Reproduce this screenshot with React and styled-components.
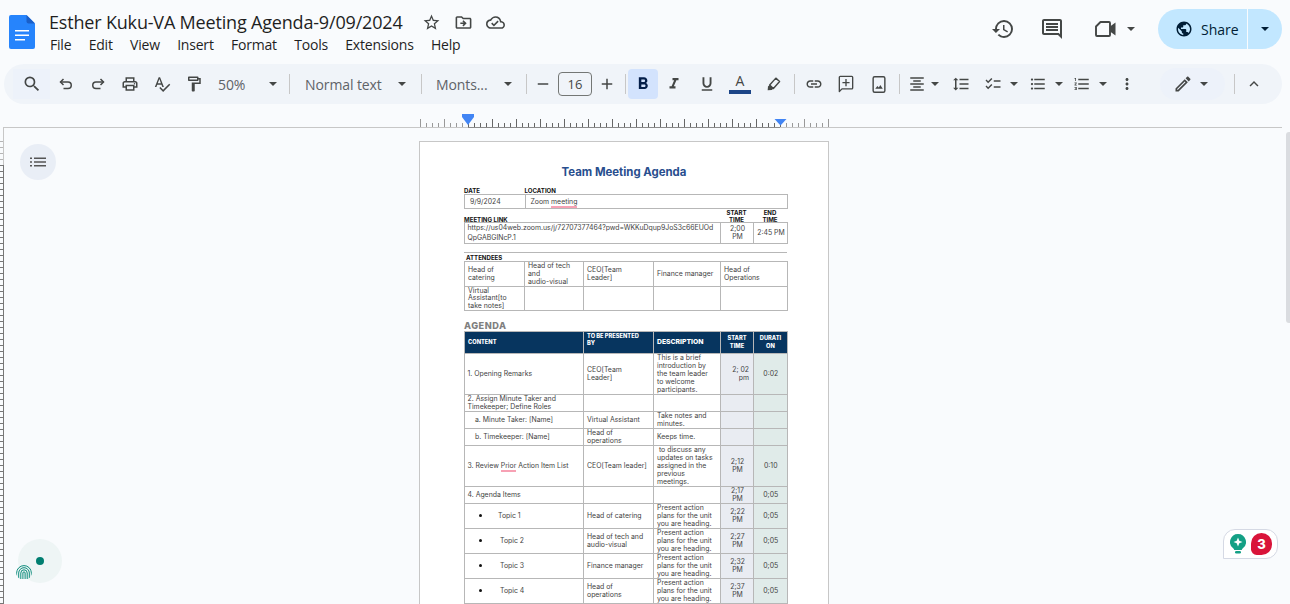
import React from "react";
import styled, { createGlobalStyle } from "styled-components";
import {
  MdSearch, MdOutlinePrint, MdOutlineSpellcheck, MdOutlineFormatPaint,
  MdRemove, MdAdd, MdFormatBold, MdFormatItalic, MdFormatUnderlined, MdLink,
  MdFormatAlignCenter, MdFormatLineSpacing, MdChecklist, MdFormatListBulleted,
  MdFormatListNumbered, MdMoreVert, MdOutlineEdit, MdExpandLess, MdHistory,
  MdOutlineComment, MdPublic, MdStarBorder, MdOutlineDriveFileMove, MdOutlineCloudDone,
} from "react-icons/md";

const GlobalStyle = createGlobalStyle`
  html, body {
    margin: 0;
    height: 100%;
    overflow: hidden;
    background: #f9fbfd;
    font-family: "Open Sans", "Liberation Sans", sans-serif;
    color: #1f1f1f;
  }
`;

const Screen = styled.div`
  width: 1290px;
  height: 604px;
  position: relative;
  overflow: hidden;
  display: flex;
  flex-direction: column;
`;

const Header = styled.header`
  height: 64px;
  display: flex;
  flex-shrink: 0;
`;
const LogoWrap = styled.div`
  width: 49px;
  padding: 15px 0 0 9px;
  box-sizing: border-box;
  flex-shrink: 0;
`;
const TitleBlock = styled.div`
  display: flex;
  flex-direction: column;
  padding-top: 10px;
`;
const TitleRow = styled.div`
  display: flex;
  align-items: center;
  height: 25px;
`;
const DocTitle = styled.div`
  font-size: 18px;
  line-height: 25px;
  letter-spacing: -0.18px;
  width: 366px;
  color: #1f1f1f;
  white-space: nowrap;
`;
const TitleIcon = styled.span`
  width: 32px;
  display: flex;
  justify-content: center;
  font-size: 19px;
  color: #444746;
`;
const Menu = styled.nav`
  display: flex;
  gap: 17.3px;
  padding-left: 1px;
  font-size: 14px;
  letter-spacing: -0.2px;
  line-height: 20px;
  color: #1f1f1f;
`;
const HeaderRight = styled.div`
  margin-left: auto;
  margin-right: 8px;
  padding-top: 9px;
  display: flex;
  align-items: flex-start;
`;
const HeaderIcon = styled.span`
  width: ${(p) => p.$w}px;
  height: 40px;
  margin-left: ${(p) => p.$ml || 0}px;
  display: flex;
  align-items: center;
  justify-content: center;
  color: #444746;
  font-size: 24px;
`;
const ShareButton = styled.div`
  width: 124px;
  height: 40px;
  margin-left: 20px;
  border-radius: 20px;
  background: #c2e7ff;
  display: flex;
  color: #001d35;
  font-size: 14px;
  font-weight: 500;
`;
const ShareMain = styled.div`
  width: 90px;
  display: flex;
  align-items: center;
  gap: 8px;
  padding-left: 17px;
  box-sizing: border-box;
  border-right: 1px solid #f9fbfd;
  font-size: 14px;
`;
const ShareDrop = styled.div`
  flex: 1;
  display: flex;
  align-items: center;
  justify-content: center;
`;

const Caret = styled.span`
  display: inline-block;
  width: 0;
  height: 0;
  border-left: 4.5px solid transparent;
  border-right: 4.5px solid transparent;
  border-top: 4.5px solid ${(p) => p.$color || "#444746"};
`;

const Toolbar = styled.div`
  height: 40px;
  margin: 0 8px 0 4px;
  padding-left: 9px;
  border-radius: 20px;
  background: #f0f4f9;
  display: flex;
  align-items: center;
  color: #444746;
  flex-shrink: 0;
`;
const ToolBtn = styled.div`
  width: ${(p) => p.$w || 32}px;
  height: 30px;
  margin-left: ${(p) => p.$ml || 0}px;
  flex-shrink: 0;
  display: flex;
  align-items: center;
  justify-content: center;
  font-size: ${(p) => p.$size || 18}px;
  color: #444746;
  position: relative;
`;
const SearchBtn = styled(ToolBtn)`
  background: #edf2fa;
  width: 37px;
  font-size: 20px;
`;
const ActiveBtn = styled(ToolBtn)`
  background: #d3e3fd;
  border-radius: 4px;
  color: #041e49;
  width: 30px;
  font-size: 20px;
`;
const Divider = styled.span`
  width: 1px;
  height: 20px;
  background: #c7c7c7;
  margin-left: ${(p) => p.$ml || 0}px;
  margin-right: ${(p) => p.$mr || 0}px;
  flex-shrink: 0;
`;
const Dropdown = styled.div`
  width: ${(p) => p.$w}px;
  padding: 0 8px 0 ${(p) => p.$pl || 8}px;
  box-sizing: border-box;
  display: flex;
  align-items: center;
  justify-content: space-between;
  font-size: 14px;
  letter-spacing: -0.1px;
  color: #5f6368;
  flex-shrink: 0;
`;
const SizeBox = styled.div`
  width: 34px;
  height: 24px;
  box-sizing: border-box;
  border: 1px solid #747775;
  border-radius: 4px;
  display: flex;
  align-items: center;
  justify-content: center;
  font-size: 13px;
  color: #444746;
  flex-shrink: 0;
`;
const ColorLetter = styled.span`
  font-size: 14px;
  line-height: 14px;
  font-weight: 500;
  margin-top: -7px;
  color: #444746;
`;
const ColorBar = styled.span`
  position: absolute;
  left: 5px;
  right: 5px;
  bottom: 5px;
  height: 4px;
  background: #1c4587;
`;
const ModePill = styled.div`
  width: 65px;
  height: 32px;
  margin-left: 18px;
  border-radius: 16px;
  background: #edf2fa;
  display: flex;
  align-items: center;
  gap: 7px;
  padding-left: 13px;
  box-sizing: border-box;
  font-size: 20px;
  flex-shrink: 0;
`;

const RulerRow = styled.div`
  height: 24px;
  padding-left: 3px;
  flex-shrink: 0;
  line-height: 0;
`;

const Workspace = styled.main`
  flex: 1;
  display: flex;
  min-height: 0;
`;
const VerticalRuler = styled.svg`
  width: 4px;
  height: 476px;
  flex-shrink: 0;
`;
const Canvas = styled.div`
  flex: 1;
  padding: 13px 0 0 415px;
  overflow: hidden;
`;

const Page = styled.div`
  width: 410px;
  height: 560px;
  box-sizing: border-box;
  padding: 23px 41px 0 44px;
  background: #fff;
  border: 1px solid #c7c7c7;
  font-family: Inter, "Liberation Sans", sans-serif;
  font-size: 6.9px;
  line-height: 8px;
  color: #434343;
`;
const PageTitle = styled.div`
  font-size: 11.4px;
  line-height: 14px;
  font-weight: 700;
  color: #284e8e;
  text-align: center;
  padding-right: 3px;
`;
const LabelRow = styled.div`
  display: grid;
  grid-template-columns: ${(p) => p.$cols};
  align-items: end;
  margin-top: ${(p) => p.$mt || 0}px;
  padding-left: ${(p) => p.$pl || 0}px;
  height: ${(p) => p.$h}px;
`;
const Label = styled.div`
  font-size: 6.1px;
  line-height: 7px;
  font-weight: 700;
  color: #111;
  text-align: ${(p) => p.$align || "left"};
`;
const Rule = styled.div`
  height: 1px;
  background: #b7b7b7;
  margin-top: 8px;
`;
const AgendaHeading = styled.div`
  margin-top: 10px;
  height: 10px;
  font-size: 9.2px;
  letter-spacing: 0.5px;
  line-height: 10px;
  font-weight: 800;
  color: #7f7f7f;
`;

const Table = styled.table`
  width: 323px;
  table-layout: fixed;
  border-collapse: collapse;
`;
const Col = styled.col`
  width: ${(p) => p.$w}px;
`;
const Row = styled.tr`
  height: ${(p) => p.$h}px;
`;
const Cell = styled.td`
  border: 1px solid #b7b7b7;
  padding: 0 ${(p) => p.$pr ?? 2}px 0 ${(p) => p.$pl || 2.5}px;
  line-height: ${(p) => p.$lh || 8}px;
  text-align: ${(p) => p.$align || "left"};
  vertical-align: middle;
  background: ${(p) => p.$bg || "transparent"};
  overflow: hidden;
  white-space: nowrap;
`;
const HeadCell = styled.th`
  border: 1px solid #b7b7b7;
  padding: 0 3px;
  background: #07355f;
  color: #fff;
  font-size: ${(p) => p.$size || 5.7}px;
  line-height: 7.6px;
  font-weight: 800;
  text-align: ${(p) => p.$align || "left"};
  vertical-align: ${(p) => p.$valign || "middle"};
  white-space: nowrap;
`;
const Misspelled = styled.span`
  border-bottom: 2px solid #f7a1b4;
`;
const Bullet = styled.span`
  display: inline-block;
  width: 3px;
  height: 3px;
  border-radius: 50%;
  background: #111;
  margin: 0 ${(p) => p.$gap}px 1px 11.5px;
`;

const OutlineButton = styled.div`
  position: absolute;
  left: 20px;
  top: 144px;
  width: 36px;
  height: 36px;
  border-radius: 50%;
  background: #e9eef6;
  display: flex;
  align-items: center;
  justify-content: center;
`;
const Scrollbar = styled.div`
  position: absolute;
  right: 0;
  top: 132px;
  width: 4px;
  height: 191px;
  border-radius: 3px 0 0 3px;
  background: #dadce0;
`;
const AssistCircle = styled.div`
  position: absolute;
  left: 18px;
  top: 539px;
  width: 44px;
  height: 44px;
  border-radius: 50%;
  background: #eef5f5;
  display: flex;
  align-items: center;
  justify-content: center;
`;
const AssistDot = styled.span`
  width: 8px;
  height: 8px;
  border-radius: 50%;
  background: #007e70;
`;
const Fingerprint = styled.svg`
  position: absolute;
  left: 16px;
  top: 564px;
  width: 16px;
  height: 16px;
  border-radius: 50%;
`;
const HintWidget = styled.div`
  position: absolute;
  left: 1223px;
  top: 529px;
  width: 55px;
  height: 30px;
  box-sizing: border-box;
  background: #fff;
  border: 1px solid #d5d9e4;
  border-radius: 12px 12px 12px 0;
  display: flex;
  align-items: center;
  padding-left: 6px;
  gap: 5px;
`;
const HintBadge = styled.span`
  width: 21px;
  height: 22px;
  border-radius: 11px 11px 11px 6px;
  background: #d9143a;
  color: #fff;
  font-family: Inter, sans-serif;
  font-weight: 800;
  font-size: 13px;
  line-height: 22px;
  text-align: center;
`;

const DocsLogo = () => (
  <svg width="26" height="34" viewBox="0 0 26 34">
    <path d="M2 0h15.5L26 8.5V32a2 2 0 0 1-2 2H2a2 2 0 0 1-2-2V2a2 2 0 0 1 2-2z" fill="#2684fc" />
    <path d="M17.5 0L26 8.5h-6.5a2 2 0 0 1-2-2z" fill="#1a5fc8" />
    <path d="M6 15h14v1.6H6zM6 19.5h14v1.6H6zM6 24h10v1.6H6z" fill="#fff" />
  </svg>
);

const VideoIcon = () => (
  <svg width="22" height="18" viewBox="0 0 22 18" fill="none">
    <path d="M5.5 2H14a1 1 0 0 1 1 1v12a1 1 0 0 1-1 1H2a1 1 0 0 1-1-1V6.5z" stroke="#444746" strokeWidth="1.9" strokeLinejoin="round" />
    <path d="M15 6.5L20.5 2.5v13L15 11.5z" fill="#444746" />
  </svg>
);

const UndoIcon = ({ flip }) => (
  <svg width="14" height="14" viewBox="0 0 14 14" fill="none" stroke="#444746" strokeWidth="1.5">
    <g transform={flip ? "matrix(-1 0 0 1 14 0)" : undefined}>
      <path d="M4.500 2L1.500 5l3 3" />
      <path d="M1.500 5h7.500a3.200 3.200 0 0 1 0 6.500H4.500" />
    </g>
  </svg>
);

const AddCommentIcon = () => (
  <svg width="16" height="18" viewBox="0 0 18 20" fill="none" stroke="#444746" strokeWidth="1.5">
    <path d="M2.500 1.500h13a1 1 0 0 1 1 1v12a1 1 0 0 1-1 1H4.500l-3 3V2.500a1 1 0 0 1 1-1z" strokeLinejoin="round" />
    <path d="M9 4.500v8M5 8.500h8" />
  </svg>
);

const ImageIcon = () => (
  <svg width="14" height="17" viewBox="0 0 14 18" fill="none">
    <rect x="0.800" y="0.800" width="12.400" height="16.400" rx="1.600" stroke="#444746" strokeWidth="1.500" />
    <path d="M3 13.500l2.300-3 1.500 1.600 1.600-2.600 2.600 4z" fill="#444746" />
  </svg>
);

const HighlightIcon = () => (
  <svg width="15" height="15" viewBox="0 0 16 16" fill="none">
    <path d="M10.500 1.200l4 3.600-6.600 7.400-4-3.600z" stroke="#444746" strokeWidth="1.500" strokeLinejoin="round" />
    <path d="M3.900 8.600l4 3.600-1.700 1.600-4.400.2.3-3.800z" fill="#444746" />
  </svg>
);

const OutlineIcon = () => (
  <svg width="16" height="10" viewBox="0 0 16 10" fill="#555">
    <path d="M0 .4h2V2H0zM0 4.200h2v1.600H0zM0 8h2v1.600H0zM4 .4h12V2H4zM4 4.200h12v1.600H4zM4 8h12v1.600H4z" />
  </svg>
);

const BulbIcon = () => (
  <svg width="16" height="20" viewBox="0 0 16 20">
    <path d="M8 0a8 8 0 0 1 4.600 14.500c-.5.4-.8.8-.8 1.500H4.200c0-.7-.3-1.100-.8-1.500A8 8 0 0 1 8 0z" fill="#14a085" />
    <path d="M8 3.500l1.300 3.200L12.500 8l-3.200 1.300L8 12.500 6.700 9.300 3.500 8l3.200-1.300z" fill="#fff" />
    <rect x="5" y="17" width="6" height="2.600" rx="1.300" fill="#14a085" />
  </svg>
);

const ticks = [];
for (let x = 420; x <= 828; x += 6) ticks.push(x);

const Ruler = () => (
  <svg width="1279" height="24" viewBox="3 104 1279 24">
    <rect x="3" y="127" width="1279" height="1" fill="#c7c7c7" />
    <rect x="468" y="127" width="312" height="1" fill="#8a8a8a" />
    {ticks.map((x) => {
      const tall = (x - 420) % 24 === 0;
      const inside = x >= 468 && x <= 780;
      return (
        <rect
          key={x}
          x={x}
          y={tall ? 119 : 123}
          width="1"
          height={tall ? 8 : 4}
          fill={inside ? "#666" : "#999"}
        />
      );
    })}
    <rect x="462" y="114" width="12" height="3" fill="#4285f4" />
    <path d="M462 117h12l-6 8z" fill="#4285f4" />
    <path d="M774.500 119h12l-6 6.500z" fill="#4285f4" />
  </svg>
);

const railTicks = [];
for (let y = 13; y < 476; y += 6) railTicks.push(y);

const present = <>Present action<br />plans for the unit<br />you are heading.</>;

const agendaRows = [
  { h: 41, a: "1. Opening Remarks", b: <>CEO[Team<br />Leader]</>, c: <>This is a brief<br />introduction by<br />the team leader<br />to welcome<br />participants.</>, t: <>2; 02<br />pm</>, d: "0:02", talign: "right" },
  { h: 17, a: <>2. Assign Minute Taker and<br />Timekeeper; Define Roles</> },
  { h: 16, a: "a. Minute Taker: [Name]", pl: 10, b: "Virtual Assistant", c: <>Take notes and<br />minutes.</> },
  { h: 17, a: "b. Timekeeper: [Name]", pl: 10, b: <>Head of<br />operations</>, c: "Keeps time." },
  { h: 41, a: <>3. Review <Misspelled>Prior</Misspelled> Action Item List</>, b: "CEO[Team leader]", c: <>&nbsp;to discuss any<br />updates on tasks<br />assigned in the<br />previous<br />meetings.</>, t: <>2;12<br />PM</>, d: "0:10" },
  { h: 17, a: "4. Agenda Items", t: <>2;17<br />PM</>, d: "0;05" },
  { h: 25, a: <><Bullet $gap={16} />Topic 1</>, b: "Head of catering", c: present, t: <>2;22<br />PM</>, d: "0;05" },
  { h: 25, a: <><Bullet $gap={18} />Topic 2</>, b: <>Head of tech and<br />audio-visual</>, c: present, t: <>2;27<br />PM</>, d: "0;05" },
  { h: 25, a: <><Bullet $gap={18} />Topic 3</>, b: "Finance manager", c: present, t: <>2;32<br />PM</>, d: "0;05" },
  { h: 25, a: <><Bullet $gap={18} />Topic 4</>, b: <>Head of<br />operations</>, c: present, t: <>2;37<br />PM</>, d: "0;05" },
  { h: 25 },
];

const App = () => (
  <Screen>
    <GlobalStyle />
    <Header>
      <LogoWrap><DocsLogo /></LogoWrap>
      <TitleBlock>
        <TitleRow>
          <DocTitle>Esther Kuku-VA Meeting Agenda-9/09/2024</DocTitle>
          <TitleIcon><MdStarBorder /></TitleIcon>
          <TitleIcon><MdOutlineDriveFileMove /></TitleIcon>
          <TitleIcon><MdOutlineCloudDone /></TitleIcon>
        </TitleRow>
        <Menu>
          <span>File</span>
          <span>Edit</span>
          <span>View</span>
          <span>Insert</span>
          <span>Format</span>
          <span>Tools</span>
          <span>Extensions</span>
          <span>Help</span>
        </Menu>
      </TitleBlock>
      <HeaderRight>
        <HeaderIcon $w={40}><MdHistory /></HeaderIcon>
        <HeaderIcon $w={58}><MdOutlineComment /></HeaderIcon>
        <HeaderIcon $w={36} $ml={7}><VideoIcon /></HeaderIcon>
        <HeaderIcon $w={14}><Caret /></HeaderIcon>
        <ShareButton>
          <ShareMain><MdPublic size={18} />Share</ShareMain>
          <ShareDrop><Caret $color="#001d35" /></ShareDrop>
        </ShareButton>
      </HeaderRight>
    </Header>

    <Toolbar>
      <SearchBtn><MdSearch /></SearchBtn>
      <ToolBtn><UndoIcon /></ToolBtn>
      <ToolBtn><UndoIcon flip /></ToolBtn>
      <ToolBtn><MdOutlinePrint /></ToolBtn>
      <ToolBtn><MdOutlineSpellcheck /></ToolBtn>
      <ToolBtn><MdOutlineFormatPaint /></ToolBtn>
      <Dropdown $w={75} $pl={8}>50%<Caret /></Dropdown>
      <Divider $ml={4} />
      <Dropdown $w={124} $pl={15}>Normal text<Caret /></Dropdown>
      <Divider $ml={7} />
      <Dropdown $w={98} $pl={14}>Monts...<Caret /></Dropdown>
      <Divider $ml={6} />
      <ToolBtn $w={31}><MdRemove /></ToolBtn>
      <SizeBox>16</SizeBox>
      <ToolBtn $w={30}><MdAdd /></ToolBtn>
      <Divider $ml={3} $mr={2} />
      <ActiveBtn><MdFormatBold /></ActiveBtn>
      <ToolBtn><MdFormatItalic /></ToolBtn>
      <ToolBtn $ml={1}><MdFormatUnderlined /></ToolBtn>
      <ToolBtn $ml={1}><ColorLetter>A</ColorLetter><ColorBar /></ToolBtn>
      <ToolBtn $ml={1}><HighlightIcon /></ToolBtn>
      <Divider $ml={5} $mr={3} />
      <ToolBtn><MdLink /></ToolBtn>
      <ToolBtn><AddCommentIcon /></ToolBtn>
      <ToolBtn $ml={1}><ImageIcon /></ToolBtn>
      <Divider $ml={4} $mr={7} />
      <ToolBtn $w={20}><MdFormatAlignCenter /></ToolBtn>
      <ToolBtn $w={16}><Caret /></ToolBtn>
      <ToolBtn $w={32} $ml={2}><MdFormatLineSpacing /></ToolBtn>
      <ToolBtn $w={32}><MdChecklist /></ToolBtn>
      <ToolBtn $w={10}><Caret /></ToolBtn>
      <ToolBtn $w={24} $ml={7}><MdFormatListBulleted /></ToolBtn>
      <ToolBtn $w={18}><Caret /></ToolBtn>
      <ToolBtn $w={26} $ml={1}><MdFormatListNumbered /></ToolBtn>
      <ToolBtn $w={16}><Caret /></ToolBtn>
      <ToolBtn $w={30} $ml={1}><MdMoreVert /></ToolBtn>
      <ModePill><MdOutlineEdit /><Caret /></ModePill>
      <Divider $ml={9} $mr={3} />
      <ToolBtn><MdExpandLess /></ToolBtn>
    </Toolbar>

    <RulerRow><Ruler /></RulerRow>

    <Workspace>
      <VerticalRuler viewBox="0 0 4 476">
        <rect x="3" y="0" width="1" height="37" fill="#c7c7c7" />
        <rect x="3" y="37" width="1" height="439" fill="#777" />
        {railTicks.map((y) => (
          <rect key={y} x="0" y={y} width="3" height="1" fill={y < 37 ? "#b5b5b5" : "#777"} />
        ))}
      </VerticalRuler>
      <Canvas>
        <Page>
          <PageTitle>Team Meeting Agenda</PageTitle>
          <LabelRow $cols="60.5px 1fr" $h={9} $mt={6}>
            <Label>DATE</Label>
            <Label>LOCATION</Label>
          </LabelRow>
          <Table>
            <colgroup><Col $w={60.5} /><Col $w={262.5} /></colgroup>
            <tbody>
              <Row $h={14}>
                <Cell $pl={5}>9/9/2024</Cell>
                <Cell $pl={5}>Zoom <Misspelled>meeting</Misspelled></Cell>
              </Row>
            </tbody>
          </Table>
          <LabelRow $cols="256px 33px 34px" $h={13}>
            <Label>MEETING LINK</Label>
            <Label $align="center">START<br />TIME</Label>
            <Label $align="center">END<br />TIME</Label>
          </LabelRow>
          <Table>
            <colgroup><Col $w={256} /><Col $w={33} /><Col $w={34} /></colgroup>
            <tbody>
              <Row $h={20}>
                <Cell $lh={10}>https://us04web.zoom.us/j/72707377464?pwd=WKKuDqup9JoS3c66EUOd<br />QpGABGINcP.1</Cell>
                <Cell $align="center" $pl={1} $pr={0}>2;00<br />PM</Cell>
                <Cell $align="center" $pl={1} $pr={0}>2:45 PM</Cell>
              </Row>
            </tbody>
          </Table>
          <Rule />
          <LabelRow $cols="1fr" $h={8} $pl={2}>
            <Label>ATTENDEES</Label>
          </LabelRow>
          <Table>
            <colgroup><Col $w={60} /><Col $w={59} /><Col $w={70} /><Col $w={67} /><Col $w={67} /></colgroup>
            <tbody>
              <Row $h={24.5}>
                <Cell $pl={3} $lh={7.6}>Head of<br />catering</Cell>
                <Cell $pl={3} $lh={7.6}>Head of tech<br />and<br />audio-visual</Cell>
                <Cell $pl={3} $lh={7.6}>CEO[Team<br />Leader]</Cell>
                <Cell $pl={3} $lh={7.6}>Finance manager</Cell>
                <Cell $pl={3} $lh={7.6}>Head of<br />Operations</Cell>
              </Row>
              <Row $h={24}>
                <Cell $pl={3} $lh={7.4}>Virtual<br />Assistant[to<br />take notes]</Cell>
                <Cell />
                <Cell />
                <Cell />
                <Cell />
              </Row>
            </tbody>
          </Table>
          <AgendaHeading>AGENDA</AgendaHeading>
          <Table>
            <colgroup><Col $w={119} /><Col $w={70} /><Col $w={67} /><Col $w={33} /><Col $w={34} /></colgroup>
            <tbody>
              <Row $h={22}>
                <HeadCell>CONTENT</HeadCell>
                <HeadCell $valign="top">TO BE PRESENTED<br />BY</HeadCell>
                <HeadCell $size={6.8}>DESCRIPTION</HeadCell>
                <HeadCell $align="center">START<br />TIME</HeadCell>
                <HeadCell $align="center">DURATI<br />ON</HeadCell>
              </Row>
              {agendaRows.map((r, i) => (
                <Row $h={r.h} key={i}>
                  <Cell $pl={r.pl}>{r.a}</Cell>
                  <Cell $pl={3}>{r.b}</Cell>
                  <Cell $pl={3}>{r.c}</Cell>
                  <Cell $bg="#e9ecf2" $align={r.talign || "center"} $pr={r.talign ? 4 : 0} $pl={1}>{r.t}</Cell>
                  <Cell $bg="#e0ebe9" $align="center">{r.d}</Cell>
                </Row>
              ))}
            </tbody>
          </Table>
        </Page>
      </Canvas>
    </Workspace>

    <OutlineButton><OutlineIcon /></OutlineButton>
    <Scrollbar />
    <AssistCircle><AssistDot /></AssistCircle>
    <Fingerprint viewBox="0 0 16 16" fill="none" stroke="#0a8a7a" strokeWidth="1">
      <path d="M.6 9a7.400 7.400 0 0 1 14.800 0v6" />
      <path d="M.6 9v5M2.700 15V9a5.300 5.300 0 0 1 10.600 0v6" />
      <path d="M4.800 15V9a3.200 3.200 0 0 1 6.400 0v6" />
      <path d="M6.900 15V9a1.100 1.100 0 0 1 2.200 0v6" />
    </Fingerprint>
    <HintWidget><BulbIcon /><HintBadge>3</HintBadge></HintWidget>
  </Screen>
);

export default App;
